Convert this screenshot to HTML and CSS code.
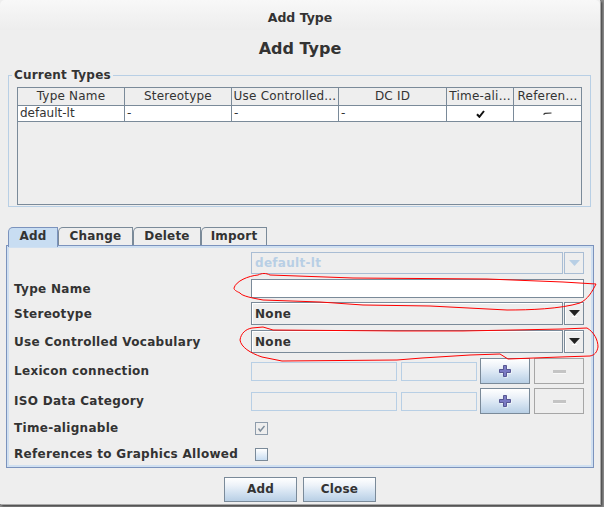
FILE: index.html
```html
<!DOCTYPE html>
<html>
<head>
<meta charset="utf-8">
<title>Add Type</title>
<link rel="stylesheet" href="styles.css">
</head>
<body>
<div class="dialog">
  <div class="titlebar">Add Type</div>
  <div class="heading">Add Type</div>
  <fieldset class="types">
    <legend>Current Types</legend>
    <div class="table">
      <div class="thead">
        <div class="th">Type Name</div>
        <div class="th">Stereotype</div>
        <div class="th">Use Controlled...</div>
        <div class="th">DC ID</div>
        <div class="th">Time-ali...</div>
        <div class="th">Referen...</div>
      </div>
      <div class="trow">
        <div class="td">default-lt</div>
        <div class="td">-</div>
        <div class="td">-</div>
        <div class="td">-</div>
        <div class="td center"><svg width="9" height="8" viewBox="0 0 9 8"><path d="M1 4.2 L3.4 6.8 L8 1" fill="none" stroke="#111" stroke-width="2"/></svg></div>
        <div class="td center"><svg width="9" height="5" viewBox="0 0 9 5"><path d="M0.5 3.5 L2 2.4 L8.5 2" fill="none" stroke="#333" stroke-width="1.2"/></svg></div>
      </div>
    </div>
  </fieldset>

  <div class="tabs">
    <div class="tab sel w-add">Add</div>
    <div class="tab w-change">Change</div>
    <div class="tab w-delete">Delete</div>
    <div class="tab w-import">Import</div>
  </div>

  <div class="panel">
    <div class="row r1">
      <div class="label"></div>
      <div class="combo disabled">
        <div class="val">default-lt</div>
        <div class="arrow"><svg width="11" height="6" viewBox="0 0 11 6"><path d="M0 0 H11 L5.5 6 Z" fill="#b8cfe5"/></svg></div>
      </div>
    </div>
    <div class="row r2">
      <div class="label">Type Name</div>
      <div class="tf"></div>
    </div>
    <div class="row r3">
      <div class="label">Stereotype</div>
      <div class="combo">
        <div class="val">None</div>
        <div class="arrow"><svg width="11" height="7" viewBox="0 0 11 7"><path d="M0 0 H11 L5.5 6 Z" fill="#222"/><path d="M3 6.5 H8" stroke="#fff" stroke-width="1"/></svg></div>
      </div>
    </div>
    <div class="row r4">
      <div class="label">Use Controlled Vocabulary</div>
      <div class="combo">
        <div class="val">None</div>
        <div class="arrow"><svg width="11" height="7" viewBox="0 0 11 7"><path d="M0 0 H11 L5.5 6 Z" fill="#222"/><path d="M3 6.5 H8" stroke="#fff" stroke-width="1"/></svg></div>
      </div>
    </div>
    <div class="row r5">
      <div class="label">Lexicon connection</div>
      <div class="ctrls">
        <div class="dtf wide"></div>
        <div class="dtf narrow"></div>
        <div class="btn plus"><svg width="13" height="13" viewBox="0 0 13 13"><path d="M5.5 1.5h3v4h4v3h-4v4h-3v-4h-4v-3h4z" fill="#fff"/><path d="M4.5 0.5h3v4h4v3h-4v4h-3v-4h-4v-3h4z" fill="#7b7bc4" stroke="#3f3f80" stroke-width="0.8"/></svg></div>
        <div class="btn minus"><span class="bar"></span></div>
      </div>
    </div>
    <div class="row r6">
      <div class="label">ISO Data Category</div>
      <div class="ctrls">
        <div class="dtf wide"></div>
        <div class="dtf narrow"></div>
        <div class="btn plus"><svg width="13" height="13" viewBox="0 0 13 13"><path d="M5.5 1.5h3v4h4v3h-4v4h-3v-4h-4v-3h4z" fill="#fff"/><path d="M4.5 0.5h3v4h4v3h-4v4h-3v-4h-4v-3h4z" fill="#7b7bc4" stroke="#3f3f80" stroke-width="0.8"/></svg></div>
        <div class="btn minus"><span class="bar"></span></div>
      </div>
    </div>
    <div class="row r7">
      <div class="label">Time-alignable</div>
      <div class="cb checked"><svg width="11" height="11" viewBox="0 0 11 11"><path d="M2.5 5.5 L4.3 8 L8.5 3" fill="none" stroke="#7d8c9b" stroke-width="1.4"/></svg></div>
    </div>
    <div class="row r8">
      <div class="label">References to Graphics Allowed</div>
      <div class="cb"></div>
    </div>
  </div>

  <div class="actions">
    <div class="pbtn">Add</div>
    <div class="pbtn">Close</div>
  </div>

  <svg class="annot" width="600" height="504" viewBox="0 0 600 504">
    <path d="M234,288 C236,281 248,276 258,275 C262,273 266,273 270,275 L353,278 L487,279 L563,282 L596,284 C592,292 588,299 580,303 C560,309 530,310 507,310 L430,306 L363,305 L320,302 L263,300 C252,298 242,296 240,293 C236,291 234,290 234,288 Z" fill="none" stroke="#ff0000" stroke-width="1"/>
    <path d="M240,340 C241,333 246,329 252,328 L263,327 L273,330 L397,331 L463,331 L563,329 L587,328 C594,332 598,340 598,347 C597,352 595,355 590,356 L560,357 L508,359 L500,354 L470,355 L422,358 L397,360 L282,361 L262,357 C250,353 241,347 240,340 Z" fill="none" stroke="#ff0000" stroke-width="1"/>
  </svg>
</div>
</body>
</html>
```
FILE: styles.css
```css
* {
  box-sizing: border-box;
}

html,
body {
  margin: 0;
  padding: 0;
}

body {
  width: 604px;
  height: 507px;
  overflow: hidden;
  background: #8a8a8a;
  font-family: "DejaVu Sans", "Liberation Sans", sans-serif;
  color: #333333;
}

.dialog {
  position: relative;
  width: 600px;
  height: 504px;
  background: #eeeeee;
  display: flex;
  flex-direction: column;
  box-shadow: 1px 1px 0 #a8a8a8, 2px 2px 2px #3c3c3c;
}

.titlebar {
  height: 30px;
  padding-top: 6px;
  line-height: 24px;
  text-align: center;
  font-weight: bold;
  font-size: 12.5px;
  background: linear-gradient(#f8f8f8, #ededed);
  border-radius: 5px 5px 0 0;
}

.heading {
  height: 38px;
  line-height: 38px;
  text-align: center;
  font-weight: bold;
  font-size: 16px;
}

/* Current Types titled border */
.types {
  margin: 0 0 0 8px;
  width: 583px;
  min-width: 0;
  border: 1px solid #b8cfe5;
  padding: 5px 8px 1px 3px;
}

.types legend {
  padding: 0 2px;
  font-weight: bold;
  font-size: 12px;
  line-height: 14px;
  letter-spacing: 0.2px;
}

.table {
  margin-left: 5px;
  width: 565px;
  height: 118px;
  border: 1px solid #7a8a99;
  background: #eeeeee;
}

.thead,
.trow {
  display: grid;
  grid-template-columns: 107px 107px 107px 108px 67px 67px;
}

.th {
  height: 18px;
  border-right: 1px solid #7a8a99;
  border-bottom: 1px solid #7a8a99;
  text-align: center;
  font-size: 12px;
  line-height: 17px;
  letter-spacing: 0.2px;
  white-space: nowrap;
  overflow: hidden;
}

.td {
  height: 16px;
  border-right: 1px solid #7a8a99;
  border-bottom: 1px solid #7a8a99;
  background: #ffffff;
  font-size: 12px;
  line-height: 15px;
  padding-left: 2px;
  white-space: nowrap;
  overflow: hidden;
}

.th:last-child,
.td:last-child {
  border-right: none;
}

.td.center {
  display: flex;
  align-items: center;
  justify-content: center;
  padding-left: 0;
}

/* Tabs */
.tabs {
  display: flex;
  margin: 20px 0 0 8px;
  height: 18px;
}

.tab {
  height: 18px;
  border: 1px solid #7a8a99;
  border-bottom: none;
  border-top-left-radius: 5px;
  background: #eeeeee;
  font-weight: bold;
  font-size: 12px;
  line-height: 17px;
  letter-spacing: 0.2px;
  text-align: center;
}

.tab.sel {
  position: relative;
  z-index: 1;
  height: 20px;
  background: #c8ddf2;
  border-color: #7b93bd;
}

.w-add { width: 50px; }
.w-change { width: 75px; }
.w-delete { width: 68px; }
.w-import { width: 66px; }

/* Tab panel */
.panel {
  margin-left: 6px;
  width: 588px;
  height: 223px;
  border: 1px solid #7b93bd;
  box-shadow: inset 0 0 0 2px #d0e0f1;
  padding: 6px 9px 3px 7px;
}

.row {
  display: grid;
  grid-template-columns: 237px 333px;
  align-items: center;
}

.r1 { height: 22px; }
.r2 { height: 19px; margin-top: 5px; }
.r3 { height: 23px; margin-top: 4px; }
.r4 { height: 23px; margin-top: 5px; }
.r5 { height: 26px; margin-top: 5px; }
.r6 { height: 26px; margin-top: 4px; }
.r7 { height: 20px; margin-top: 4px; }
.r8 { height: 20px; margin-top: 6px; }

.label {
  font-weight: bold;
  font-size: 12px;
  letter-spacing: 0.3px;
  white-space: nowrap;
}

.combo {
  display: flex;
  height: 100%;
  gap: 1px;
}

.combo .val {
  flex: 1;
  display: flex;
  align-items: center;
  padding-left: 3px;
  border: 1px solid #7a8a99;
  background: #eeeeee;
  box-shadow: inset 1px 1px 0 #ffffff;
  font-weight: bold;
  font-size: 12px;
  letter-spacing: 0.3px;
}

.combo .arrow {
  width: 20px;
  display: flex;
  align-items: center;
  justify-content: center;
  border: 1px solid #7a8a99;
  background: #eeeeee;
  box-shadow: inset 1px 1px 0 #ffffff;
}

.combo.disabled .val,
.combo.disabled .arrow {
  border-color: #a9bdd4;
  box-shadow: none;
}

.combo.disabled .val {
  color: #b8cfe5;
}

.tf {
  height: 19px;
  border: 1px solid #7a8a99;
  background: #ffffff;
}

.ctrls {
  display: flex;
  align-items: center;
  height: 100%;
}

.dtf {
  height: 19px;
  border: 1px solid #b8cfe5;
  background: #eeeeee;
}

.dtf.wide { width: 146px; }
.dtf.narrow { width: 76px; margin-left: 4px; }

.btn {
  width: 50px;
  height: 26px;
  display: flex;
  align-items: center;
  justify-content: center;
}

.btn.plus {
  margin-left: 3px;
  border: 1px solid #7a8a99;
  background: linear-gradient(#ffffff 0%, #eef3f9 30%, #d6e4f2 60%, #b8cfe5 100%);
}

.btn.minus {
  margin-left: 4px;
  border: 1px solid #a6a6a6;
  background: #eeeeee;
}

.btn.minus .bar {
  display: block;
  width: 13px;
  height: 3px;
  background: #c4c4c4;
  box-shadow: 0 1px 0 #f8f8f8;
}

.cb {
  width: 13px;
  height: 13px;
  margin-left: 4px;
  border: 1px solid #7a8a99;
  background: linear-gradient(#ffffff, #c8ddf2);
}

.cb.checked {
  border-color: #8e9cab;
  background: #eeeeee;
  display: flex;
  align-items: center;
  justify-content: center;
}

/* Dialog buttons */
.actions {
  display: flex;
  justify-content: center;
  gap: 6px;
  margin-top: 9px;
}

.pbtn {
  width: 73px;
  height: 25px;
  border: 1px solid #7a8a99;
  background: linear-gradient(#ffffff 0%, #eef3f9 30%, #d6e4f2 60%, #b8cfe5 100%);
  font-weight: bold;
  font-size: 12px;
  line-height: 23px;
  letter-spacing: 0.2px;
  text-align: center;
}

/* Red hand-drawn annotations over the form */
.annot {
  position: absolute;
  left: 0;
  top: 0;
  pointer-events: none;
}
```
